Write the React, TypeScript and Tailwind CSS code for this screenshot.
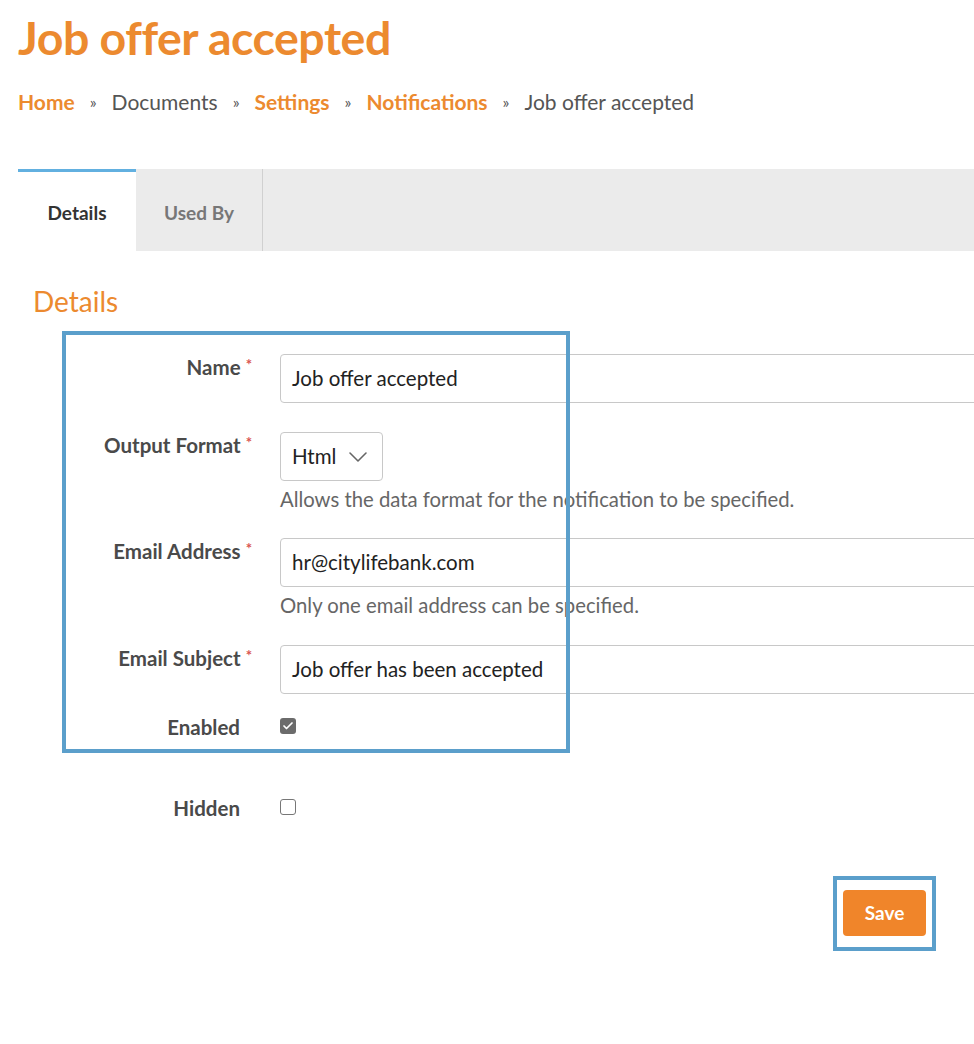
import { ChevronDown, Check } from 'lucide-react';

const Req = () => <span className="relative -top-[5px] ml-[5px] text-[15px] leading-none text-[#d9534f]">*</span>;

interface RowProps {
    label: string;
    required?: boolean;
    children: React.ReactNode;
}

const Row = ({ label, required, children }: RowProps) => (
    <div className="flex">
        <div className="w-[234px] shrink-0 pt-[1px] text-right text-[20.5px] font-bold leading-6 text-[#4a4a4a]">
            {label}
            {required ? <Req /> : <span className="inline-block w-[12px]" />}
        </div>
        <div className="ml-[28px] flex-1">{children}</div>
    </div>
);

const TextBox = ({ value }: { value: string }) => (
    <div className="flex h-[49px] w-[720px] items-center rounded border border-[#c8c8c8] px-[11px] text-[20.5px] text-[#222]">
        {value}
    </div>
);

const Help = ({ text }: { text: string }) => (
    <p className="mt-[6px] text-[20.3px] leading-6 text-[#666]">{text}</p>
);

const Sep = () => <span className="mx-[15px] text-[16px]">»</span>;

export default function App() {
    return (
        <div className="relative h-[1044px] w-[974px] overflow-hidden bg-white font-['Lato',sans-serif]">
            <div className="pl-[18px]">
                <h1 className="mt-[9px] text-[46.5px] font-bold leading-[56px] tracking-[-0.5px] text-[#ec8a2f]">
                    Job offer accepted
                </h1>
                <nav className="mt-[23px] flex items-center text-[21px] leading-7 text-[#555]">
                    <span className="font-bold text-[#ec8a2f]">Home</span>
                    <Sep />
                    <span>Documents</span>
                    <Sep />
                    <span className="font-bold text-[#ec8a2f]">Settings</span>
                    <Sep />
                    <span className="font-bold text-[#ec8a2f]">Notifications</span>
                    <Sep />
                    <span>Job offer accepted</span>
                </nav>

                <div className="mt-[53px] flex h-[82px] bg-[#ebebeb]">
                    <div className="flex w-[118px] items-center justify-center border-t-[3px] border-[#62b0e0] bg-white pt-[4px] text-[19px] font-bold text-[#333]">
                        Details
                    </div>
                    <div className="flex w-[127px] items-center justify-center border-r border-[#d0d0d0] pt-[6px] text-[19px] font-bold text-[#777]">
                        Used By
                    </div>
                </div>

                <h2 className="mt-[32px] pl-[15px] text-[28px] leading-9 text-[#ec8a2f]">Details</h2>

                <div className="mt-[35px] flex flex-col">
                    <Row label="Name" required>
                        <TextBox value="Job offer accepted" />
                    </Row>
                    <div className="mt-[29px]">
                        <Row label="Output Format" required>
                            <div className="flex h-[49px] w-[103px] items-center justify-between rounded border border-[#c8c8c8] pl-[11px] pr-[8px] text-[20.5px] text-[#222]">
                                Html
                                <ChevronDown size={32} strokeWidth={1.2} className="text-[#666]" />
                            </div>
                            <Help text="Allows the data format for the notification to be specified." />
                        </Row>
                    </div>
                    <div className="mt-[27px]">
                        <Row label="Email Address" required>
                            <TextBox value="hr@citylifebank.com" />
                            <Help text="Only one email address can be specified." />
                        </Row>
                    </div>
                    <div className="mt-[28px]">
                        <Row label="Email Subject" required>
                            <TextBox value="Job offer has been accepted" />
                        </Row>
                    </div>
                    <div className="mt-[20px]">
                        <Row label="Enabled">
                            <div className="mt-[4px] flex h-[16px] w-[16px] items-center justify-center rounded-[3px] bg-[#6b6b6b]">
                                <Check size={12} strokeWidth={3.5} className="text-white" />
                            </div>
                        </Row>
                    </div>
                    <div className="mt-[56px]">
                        <Row label="Hidden">
                            <div className="mt-[4px] h-[16px] w-[16px] rounded-[3px] border border-[#777]" />
                        </Row>
                    </div>
                </div>

                <div className="mt-[70px] flex justify-end pr-[48px]">
                    <button
                        type="button"
                        className="h-[46px] w-[83px] rounded bg-[#f0852a] text-[19px] font-bold text-white"
                    >
                        Save
                    </button>
                </div>
            </div>

            <div className="pointer-events-none absolute left-[62px] top-[331px] h-[422px] w-[508px] border-4 border-[#5b9fcb]" />
            <div className="pointer-events-none absolute left-[833px] top-[876px] h-[75px] w-[103px] border-4 border-[#5b9fcb]" />
        </div>
    );
}
